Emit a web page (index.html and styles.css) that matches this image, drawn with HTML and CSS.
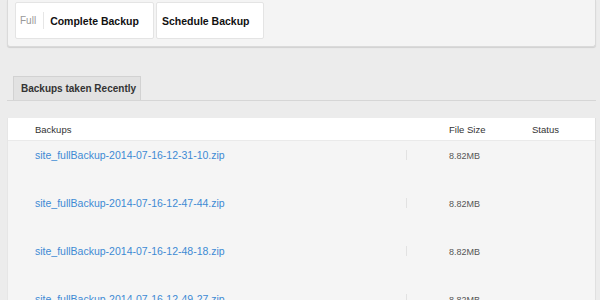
FILE: index.html
```html
<!DOCTYPE html>
<html lang="en">
<head>
    <meta charset="UTF-8">
    <meta name="viewport" content="width=device-width, initial-scale=1.0">
    <title>Backups</title>
    <link rel="stylesheet" href="styles.css">
</head>
<body>
    <div class="toolbar">
        <div class="tool first">
            <span class="label">Full</span>
            <span class="sep"></span>
            <span class="action">Complete Backup</span>
        </div>
        <div class="tool second">
            <span class="action">Schedule Backup</span>
        </div>
    </div>

    <div class="tabs">
        <div class="tab">Backups taken Recently</div>
    </div>

    <div class="backups">
        <div class="row head">
            <div class="cell name">Backups</div>
            <div class="cell size">File Size</div>
            <div class="cell status">Status</div>
        </div>
        <div class="row">
            <div class="cell name"><a href="#">site_fullBackup-2014-07-16-12-31-10.zip</a></div>
            <div class="cell size">8.82MB</div>
            <div class="cell status"></div>
        </div>
        <div class="row">
            <div class="cell name"><a href="#">site_fullBackup-2014-07-16-12-47-44.zip</a></div>
            <div class="cell size">8.82MB</div>
            <div class="cell status"></div>
        </div>
        <div class="row">
            <div class="cell name"><a href="#">site_fullBackup-2014-07-16-12-48-18.zip</a></div>
            <div class="cell size">8.82MB</div>
            <div class="cell status"></div>
        </div>
        <div class="row">
            <div class="cell name"><a href="#">site_fullBackup-2014-07-16-12-49-27.zip</a></div>
            <div class="cell size">8.82MB</div>
            <div class="cell status"></div>
        </div>
    </div>
</body>
</html>
```

FILE: styles.css
```css
body {
    font-family: "Liberation Sans", Arial, sans-serif;
    background-color: #ececec;
    margin: 0;
    color: #333;
    overflow: hidden;
}
.toolbar {
    display: flex;
    gap: 2px;
    margin: 0 4px 0 7px;
    padding: 2px 7px 7px 7px;
    background: #f4f4f4;
    border: 1px solid #dadada;
    border-top: none;
    border-radius: 0 0 3px 3px;
    box-shadow: 0 1px 1px rgba(0, 0, 0, 0.12);
}
.tool {
    display: flex;
    align-items: center;
    height: 37px;
    box-sizing: border-box;
    padding: 0 5px;
    background: #fff;
    border: 1px solid #e4e4e4;
    border-radius: 2px;
    font-size: 10.5px;
}
.tool.first {
    width: 139px;
    padding-left: 4px;
}
.tool.second {
    width: 108px;
}
.tool .label {
    color: #999;
    font-size: 10px;
}
.tool .sep {
    width: 1px;
    height: 17px;
    background: #e6e6e6;
    margin: 0 6px 0 7px;
}
.tool .action {
    font-weight: bold;
    color: #111;
}
.tabs {
    margin: 29px 4px 0 7px;
    padding-left: 6px;
    border-bottom: 1px solid #d6d6d6;
    display: flex;
}
.tab {
    width: 128px;
    height: 24px;
    box-sizing: border-box;
    padding: 6px 0 0 7px;
    background: #e2e2e2;
    border: 1px solid #d2d2d2;
    border-bottom: none;
    font-size: 10px;
    font-weight: bold;
    color: #333;
}
.backups {
    margin: 17px 4px 0 7px;
    border-left: 1px solid #e6e6e6;
    border-right: 1px solid #e0e0e0;
}
.row {
    display: grid;
    grid-template-columns: 399px 125px 1fr;
    height: 48px;
    background: #f5f5f5;
    font-size: 9px;
    color: #555;
}
.row.head {
    height: 22px;
    background: #fff;
    font-size: 9.5px;
    color: #333;
    border-bottom: 1px solid #eaeaea;
    align-items: center;
}
.cell.name {
    padding-left: 27px;
}
.row:not(.head) .cell {
    padding-top: 10px;
}
.row:not(.head) .cell.name {
    padding-top: 8px;
    position: relative;
}
.row:not(.head) .cell.name::after {
    content: "";
    position: absolute;
    right: 0;
    top: 9px;
    width: 1px;
    height: 10px;
    background: #e2e2e2;
}
.cell.size {
    padding-left: 42px;
}
.row a {
    color: #3d8ad4;
    text-decoration: none;
    font-size: 10.5px;
}
```
